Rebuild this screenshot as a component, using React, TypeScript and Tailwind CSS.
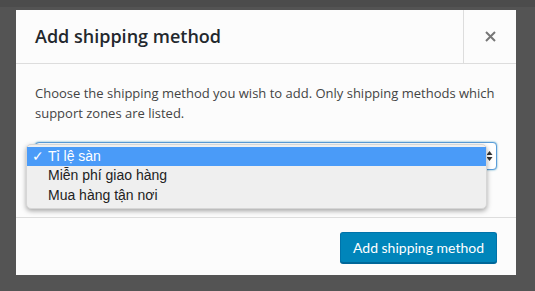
import React from "react";

export default function App() {
  const items = ["Miễn phí giao hàng", "Mua hàng tận nơi"];
  return (
    <div className="w-[535px] h-[291px] bg-[#545454] overflow-hidden">
      <div className="h-[7px] bg-[#4c4c4c]" />
      <div className="ml-[16px] mt-[3px] w-[500px] h-[265px] bg-[#fcfcfc] flex flex-col">
        {/* header */}
        <div className="h-[54px] flex border-b border-[#dddddd]">
          <div
            className="flex-1 flex items-center pl-[19px] text-[18px] font-semibold text-[#23282d]"
            style={{ fontFamily: '"Open Sans", "Liberation Sans", sans-serif' }}
          >
            Add shipping method
          </div>
          <div className="w-[53px] border-l border-[#dddddd] flex items-center justify-center">
            <svg width="11" height="11" viewBox="0 0 11 11">
              <path d="M1 1L10 10M10 1L1 10" stroke="#777" strokeWidth="2" />
            </svg>
          </div>
        </div>
        {/* body */}
        <div className="relative flex-1 px-[19px] pt-[20px]">
          <p
            className="text-[13px] leading-[19.5px] text-[#444444]"
            style={{ fontFamily: '"Open Sans", "Liberation Sans", sans-serif' }}
          >
            Choose the shipping method you wish to add. Only shipping methods which support zones are listed.
          </p>
          <div className="mt-[19px] h-[28px] rounded-[4px] border border-[#5b9dd9] shadow-[0_0_2px_rgba(30,140,190,0.8)] bg-white flex items-center justify-end pr-[3px]">
            <svg width="7" height="12" viewBox="0 0 7 12">
              <path d="M3.5 1L6.5 5H0.5Z" fill="#333" />
              <path d="M3.5 11L6.5 7H0.5Z" fill="#333" />
            </svg>
          </div>
          {/* popup list */}
          <div
            className="absolute left-[10px] top-[80px] w-[461px] h-[65px] bg-[#efefef] rounded-[5px] shadow-[0_2px_5px_rgba(0,0,0,0.35)] border border-[#d6d6d6] pt-[2px] text-[14px] text-[#222]"
            style={{ fontFamily: '"Liberation Sans", Arial, sans-serif' }}
          >
            <div className="h-[19px] bg-[#4a9bf8] text-white flex items-center">
              <span className="w-[21px] pl-[5px] text-[14px]">✓</span>
              <span>Tỉ lệ sàn</span>
            </div>
            {items.map((t) => (
              <div key={t} className="h-[19.5px] flex items-center pl-[21px]">
                {t}
              </div>
            ))}
          </div>
        </div>
        {/* footer */}
        <div className="h-[58px] border-t border-[#dddddd] flex items-center justify-end pr-[19px] pt-[1px]">
          <button
            className="h-[31px] px-[12px] rounded-[3px] bg-[#0085ba] border border-[#0073aa] border-b-[#006799] text-white text-[14px] shadow-[0_1px_0_#006799]"
            style={{ fontFamily: 'Lato, "Open Sans", sans-serif' }}
          >
            Add shipping method
          </button>
        </div>
      </div>
    </div>
  );
}
